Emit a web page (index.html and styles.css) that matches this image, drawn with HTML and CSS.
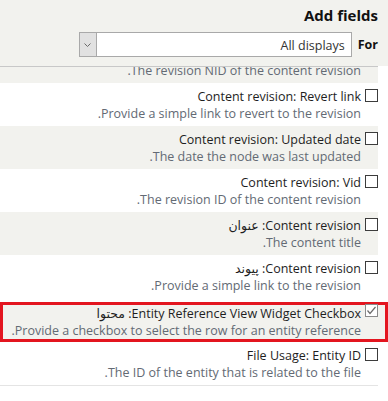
FILE: index.html
```html
<!DOCTYPE html>
<html lang="fa" dir="rtl">
<head>
    <meta charset="UTF-8">
    <meta name="viewport" content="width=device-width, initial-scale=1.0">
    <title>Add fields</title>
    <link rel="stylesheet" href="styles.css">
</head>
<body>

    <div class="header">
        <h2 class="heading">Add fields</h2>
        <div class="filter">
            <span class="filter-label">For</span>
            <div class="select">
                <span class="select-value">All displays</span>
                <span class="select-arrow">
                    <svg width="7" height="4" viewBox="0 0 7 4"><polyline points="0.5,0.5 3.5,3.5 6.5,0.5" fill="none" stroke="#6a6a6a" stroke-width="1"/></svg>
                </span>
            </div>
        </div>
    </div>

    <div class="list">
        <div class="clip">
            <div class="item odd">
                <span class="box"></span>
                <div class="item-text">
                    <div class="item-label">Content revision: Nid</div>
                    <div class="item-desc">The revision NID of the content revision.</div>
                </div>
            </div>
        </div>

        <div class="item">
            <span class="box"></span>
            <div class="item-text">
                <div class="item-label">Content revision: Revert link</div>
                <div class="item-desc">Provide a simple link to revert to the revision.</div>
            </div>
        </div>

        <div class="item odd">
            <span class="box"></span>
            <div class="item-text">
                <div class="item-label">Content revision: Updated date</div>
                <div class="item-desc">The date the node was last updated.</div>
            </div>
        </div>

        <div class="item">
            <span class="box"></span>
            <div class="item-text">
                <div class="item-label">Content revision: Vid</div>
                <div class="item-desc">The revision ID of the content revision.</div>
            </div>
        </div>

        <div class="item odd">
            <span class="box"></span>
            <div class="item-text">
                <div class="item-label">Content revision: عنوان</div>
                <div class="item-desc">The content title.</div>
            </div>
        </div>

        <div class="item">
            <span class="box"></span>
            <div class="item-text">
                <div class="item-label">Content revision: پیوند</div>
                <div class="item-desc">Provide a simple link to the revision.</div>
            </div>
        </div>

        <div class="item odd picked">
            <span class="box checked">
                <svg width="11" height="11" viewBox="0 0 11 11"><polyline points="1.5,5.5 4,8.5 9.5,2" fill="none" stroke="#6b6b6b" stroke-width="1.2"/></svg>
            </span>
            <div class="item-text">
                <div class="item-label">Entity Reference View Widget Checkbox: محتوا</div>
                <div class="item-desc">Provide a checkbox to select the row for an entity reference.</div>
            </div>
        </div>

        <div class="item">
            <span class="box"></span>
            <div class="item-text">
                <div class="item-label">File Usage: Entity ID</div>
                <div class="item-desc">The ID of the entity that is related to the file.</div>
            </div>
        </div>
    </div>

</body>
</html>
```

FILE: styles.css
```css
body {
    margin: 0;
    background: #fff;
    font-family: 'Open Sans', 'DejaVu Sans', sans-serif;
    font-size: 12.5px;
    color: #222;
}

.header {
    background: #f2f2ee;
    height: 66px;
    box-sizing: border-box;
    padding: 5px 10px 0 0;
}

.heading {
    margin: 0 0 7px;
    font-size: 15px;
    line-height: 20px;
    font-weight: bold;
    color: #111;
}

.filter {
    display: flex;
    align-items: flex-start;
    gap: 6px;
}

.filter-label {
    font-weight: bold;
    line-height: 19px;
    padding-top: 3px;
    color: #111;
}

.select {
    display: flex;
    width: 273px;
    height: 25px;
    box-sizing: border-box;
    border: 1px solid #a9a9a9;
    background: #fff;
}

.select-value {
    flex: 1;
    line-height: 19px;
    padding: 3px 6px 0 0;
    color: #333;
}

.select-arrow {
    width: 16px;
    display: flex;
    justify-content: center;
    align-items: center;
    background: #e1e1e1;
    border-right: 1px solid #a9a9a9;
}

.list {
    margin-right: 10px;
    border-top: 1px solid #c8c8c8;
    border-bottom: 1px solid #e4e4e4;
}

.clip {
    height: 16px;
    overflow: hidden;
}

.clip .item {
    margin-top: -27px;
}

.item {
    display: flex;
    height: 43px;
    box-sizing: border-box;
    padding-top: 5px;
}

.item.odd {
    background: #f2f2ee;
}

.box {
    width: 13px;
    height: 13px;
    box-sizing: border-box;
    margin: 1px 0 0 4px;
    border: 1px solid #3c3c3c;
    background: #fff;
    flex-shrink: 0;
    display: flex;
    justify-content: center;
    align-items: center;
}

.box.checked {
    border-color: #8a8a8a;
}

.item-label {
    line-height: 17px;
    color: #1e1e1e;
}

.item-desc {
    line-height: 17px;
    color: #636a74;
}

.picked {
    height: 40px;
    margin: 4px -10px 0 0;
    padding: 0 7px 0 0;
    border: 3px solid #e3151f;
}

.picked .box {
    margin-top: -1px;
}
```
